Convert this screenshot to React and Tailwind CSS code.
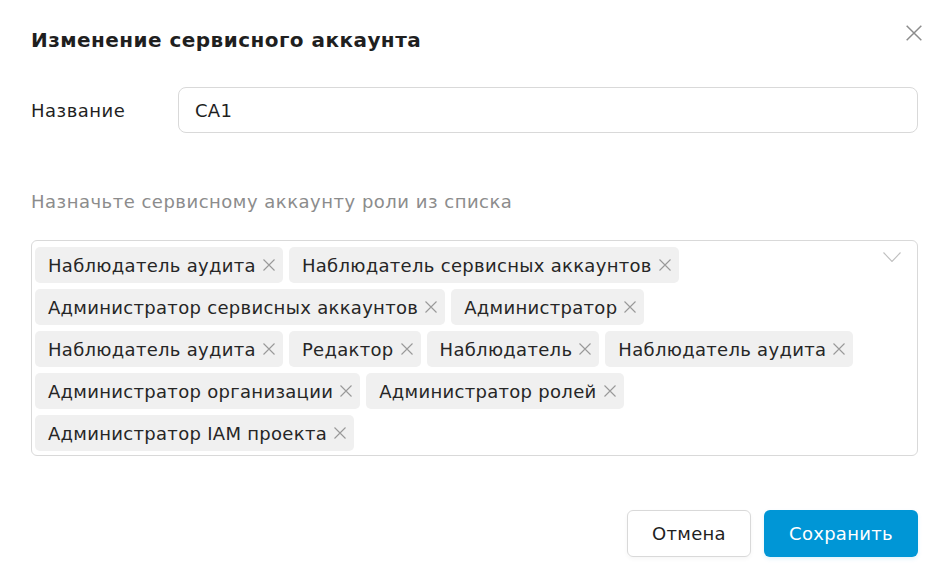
const roles = [
  'Наблюдатель аудита',
  'Наблюдатель сервисных аккаунтов',
  'Администратор сервисных аккаунтов',
  'Администратор',
  'Наблюдатель аудита',
  'Редактор',
  'Наблюдатель',
  'Наблюдатель аудита',
  'Администратор организации',
  'Администратор ролей',
  'Администратор IAM проекта',
];

function Cross({ className, size }) {
  return (
    <svg viewBox="0 0 12 12" width={size} height={size} className={className} fill="none" stroke="currentColor" strokeWidth="1.1">
      <path d="M0.5 0.5 L11.5 11.5 M11.5 0.5 L0.5 11.5" />
    </svg>
  );
}

function Tag({ label }) {
  return (
    <span className="flex items-center h-[36px] pl-[13px] pr-[8px] bg-[#f0f0f0] rounded-[5px] text-[18px] text-[#262626] tracking-[0.3px]">
      {label}
      <Cross size={12} className="ml-[7px] text-[#999999]" />
    </span>
  );
}

export default function App() {
  return (
    <div className="w-[949px] h-[578px] bg-white text-[#1f1f1f] font-['DejaVu_Sans',sans-serif] relative">
      <div className="flex flex-col pl-[31px] pr-[31px] pt-[26px]">
        {/* Header */}
        <div className="flex items-start justify-between">
          <h2 className="text-[20px] font-bold leading-[28px] tracking-[0.45px]">Изменение сервисного аккаунта</h2>
          <button type="button" className="-mr-[4px] mt-[-1px] text-[#8c8c8c]">
            <Cross size={16} />
          </button>
        </div>

        {/* Name */}
        <div className="flex items-center mt-[33px]">
          <label className="w-[147px] text-[18px] tracking-[0.5px]">Название</label>
          <div className="flex-1 h-[46px] border border-[#d9d9d9] rounded-[8px] flex items-center px-[16px] text-[18px] tracking-[0.3px]">
            CA1
          </div>
        </div>

        <p className="mt-[55px] text-[18px] text-[#8c8c8c] tracking-[0.5px]">Назначьте сервисному аккаунту роли из списка</p>

        {/* Roles multiselect */}
        <div className="mt-[25px] border border-[#d9d9d9] rounded-[6px] pt-[6px] pl-[3px] pb-[4px] pr-[40px] relative">
          <div className="flex flex-wrap gap-[6px]">
            {roles.map((r, i) => (
              <Tag key={i} label={r} />
            ))}
          </div>
          <svg viewBox="0 0 18 10" className="absolute right-[16px] top-[11px] w-[18px] h-[10px] text-[#bfbfbf]" fill="none" stroke="currentColor" strokeWidth="1.1">
            <path d="M0.5 0.5 L9 9.5 L17.5 0.5" />
          </svg>
        </div>

        {/* Footer */}
        <div className="flex justify-end gap-[13px] mt-[54px]">
          <button type="button" className="w-[124px] h-[47px] border border-[#d9d9d9] rounded-[6px] text-[18px] tracking-[0.3px] shadow-[0_2px_4px_rgba(0,0,0,0.04)]">
            Отмена
          </button>
          <button type="button" className="w-[154px] h-[47px] bg-[#0096d6] text-white rounded-[6px] text-[18px] tracking-[0.3px] shadow-[0_2px_4px_rgba(0,150,214,0.12)]">
            Сохранить
          </button>
        </div>
      </div>
    </div>
  );
}
